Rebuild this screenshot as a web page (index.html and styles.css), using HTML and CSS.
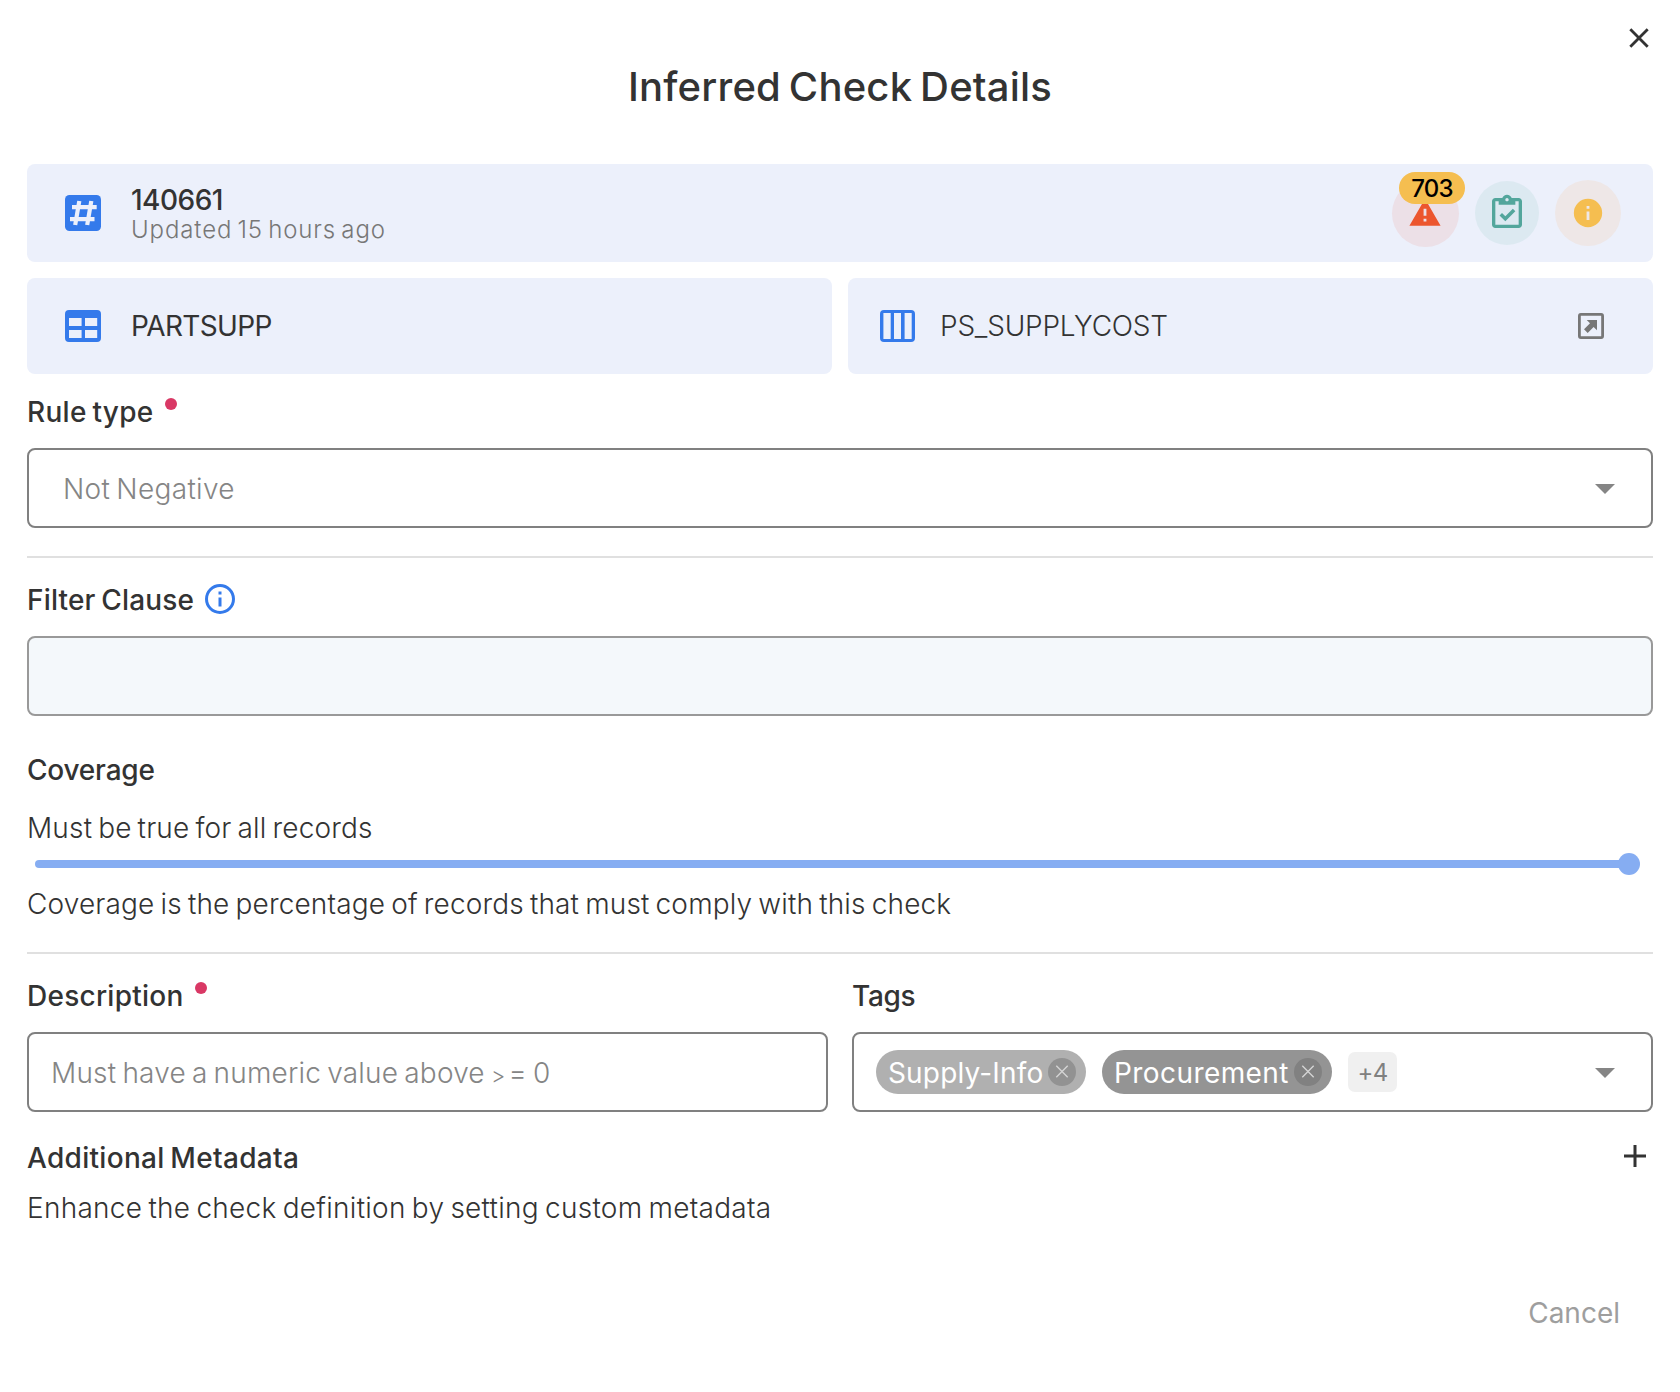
FILE: index.html
```html
<!DOCTYPE html>
<html lang="en">
<head>
<meta charset="utf-8">
<title>Inferred Check Details</title>
<link rel="stylesheet" href="styles.css">
</head>
<body>
<main class="dialog">
  <header class="dialog-header">
    <svg class="close" viewBox="0 0 20 20"><path d="M1.3 1.3 18.7 18.7M18.7 1.3 1.3 18.7"/></svg>
    <h1 class="title">Inferred Check Details</h1>
  </header>

  <section class="card summary">
    <svg class="icon-hash" viewBox="0 0 36 36"><rect width="36" height="36" rx="4.5"/><path d="M7 12.1H31.7M5 24.1H29.5M14.3 6 10.2 30M26.3 6 22.2 30"/></svg>
    <div class="summary-text">
      <div class="check-id">140661</div>
      <div class="updated">Updated 15 hours ago</div>
    </div>
    <div class="statuses">
      <div class="status status-alert">
        <svg viewBox="0 0 24 24"><path d="M13 14H11V9H13M13 18H11V16H13M1 21H23L12 2Z"/></svg>
        <span class="badge">703</span>
      </div>
      <div class="status status-check">
        <svg viewBox="0 0 24 24"><path d="M19 3H14.82C14.4 1.84 13.3 1 12 1S9.6 1.84 9.18 3H5C3.9 3 3 3.9 3 5V19C3 20.1 3.9 21 5 21H19C20.1 21 21 20.1 21 19V5C21 3.9 20.1 3 19 3M12 3C12.55 3 13 3.45 13 4S12.55 5 12 5 11 4.55 11 4 11.45 3 12 3M7 7H17V5H19V19H5V5H7V7M7.5 13.5 9 12 11 14 15.5 9.5 17 11 11 17Z"/></svg>
      </div>
      <div class="status status-info">
        <svg viewBox="0 0 24 24"><path d="M13 9H11V7H13M13 17H11V11H13M12 2A10 10 0 0 0 2 12 10 10 0 0 0 12 22 10 10 0 0 0 22 12 10 10 0 0 0 12 2Z"/></svg>
      </div>
    </div>
  </section>

  <section class="sources">
    <div class="card source">
      <svg class="icon-table" viewBox="0 0 36 32"><path fill-rule="evenodd" d="M4 0H32A4 4 0 0 1 36 4V28A4 4 0 0 1 32 32H4A4 4 0 0 1 0 28V4A4 4 0 0 1 4 0ZM4 8V16H16.6V8ZM20 8V16H32.2V8ZM4 20V28H16.6V20ZM20 20V28H32.2V20Z"/></svg>
      <span class="table-name">PARTSUPP</span>
    </div>
    <div class="card source source-field">
      <svg class="icon-columns" viewBox="0 0 35 32"><path fill-rule="evenodd" d="M4 0H31A4 4 0 0 1 35 4V28A4 4 0 0 1 31 32H4A4 4 0 0 1 0 28V4A4 4 0 0 1 4 0ZM3.4 3V29H10.7V3ZM14 3V29H21V3ZM24.6 3V29H31.7V3Z"/></svg>
      <span class="field-name">PS_SUPPLYCOST</span>
      <svg class="icon-open" viewBox="0 0 26 26"><rect x="1.4" y="1.4" width="23.2" height="23.2" rx="1.5"/><path d="M8.7 7H19V17.3L15.6 14 9.7 20 6 16.2 12 10.3Z"/></svg>
    </div>
  </section>

  <section class="field rule-type">
    <div class="label label-rule">Rule type<i class="required"></i></div>
    <div class="control select"><span class="value value-rule">Not Negative</span><i class="caret"></i></div>
  </section>

  <hr class="divider">

  <section class="field filter">
    <div class="label label-filter">Filter Clause
      <svg class="icon-info" viewBox="0 0 24 24"><path d="M11 9H13V7H11M12 20C7.59 20 4 16.41 4 12S7.59 4 12 4 20 7.59 20 12 16.41 20 12 20M12 2A10 10 0 0 0 2 12 10 10 0 0 0 12 22 10 10 0 0 0 22 12 10 10 0 0 0 12 2M11 17H13V11H11V17Z"/></svg>
    </div>
    <div class="control empty"></div>
  </section>

  <section class="coverage">
    <div class="label label-coverage">Coverage</div>
    <p class="text must">Must be true for all records</p>
    <div class="slider"><i class="track"></i><i class="thumb"></i></div>
    <p class="text hint">Coverage is the percentage of records that must comply with this check</p>
  </section>

  <hr class="divider divider-low">

  <section class="columns">
    <div class="field">
      <div class="label label-description">Description<i class="required"></i></div>
      <div class="control description"><span class="value value-description">Must have a numeric value above <span class="sign">&gt;</span>= 0</span></div>
    </div>
    <div class="field">
      <div class="label label-tags">Tags</div>
      <div class="control tags">
        <span class="chip chip-supply"><span class="chip-text">Supply-Info</span><svg viewBox="0 0 28 28"><circle cx="14" cy="14" r="14"/><path d="M8.3 7.8 19.7 19.2M19.7 7.8 8.3 19.2"/></svg></span>
        <span class="chip chip-procurement"><span class="chip-text">Procurement</span><svg viewBox="0 0 28 28"><circle cx="14" cy="14" r="14"/><path d="M8.3 7.8 19.7 19.2M19.7 7.8 8.3 19.2"/></svg></span>
        <span class="more">+4</span>
        <i class="caret"></i>
      </div>
    </div>
  </section>

  <section class="metadata">
    <div class="metadata-head">
      <div class="label label-metadata">Additional Metadata</div>
      <svg class="plus" viewBox="0 0 22 22"><path d="M0 11H22M11 0V22"/></svg>
    </div>
    <p class="text">Enhance the check definition by setting custom metadata</p>
  </section>

  <footer class="actions"><button class="cancel" type="button">Cancel</button></footer>
</main>
</body>
</html>
```
FILE: styles.css
```css
* { box-sizing: border-box; }

body {
  margin: 0;
  background: #fff;
  color: #333;
  font-family: Inter, "Noto Sans", sans-serif;
  font-size: 28px;
  line-height: 36px;
}

svg { display: block; flex: none; }
h1, p { margin: 0; }
i { display: block; flex: none; }

.dialog { height: 1392px; padding: 28px 27px 0; }

/* header */
.dialog-header { display: flex; flex-direction: column; }
.close {
  align-self: flex-end;
  width: 20px;
  height: 20px;
  margin-right: 4px;
  stroke: #333;
  stroke-width: 2.8;
}
.title {
  margin-top: 15px;
  font-size: 40px;
  font-weight: 500;
  line-height: 48px;
  letter-spacing: 0.2px;
  word-spacing: -3px;
  text-align: center;
}

/* cards */
.card {
  display: flex;
  align-items: center;
  border-radius: 8px;
  background: #ecf0fb;
}
.summary { height: 98px; margin-top: 53px; padding: 0 32px 0 38px; }
.icon-hash { width: 36px; height: 36px; fill: #347aeb; }
.icon-hash path { fill: none; stroke: #ecf0fb; stroke-width: 4.2; }
.summary-text { flex: 1; margin-left: 30px; padding-top: 1px; white-space: nowrap; }
.check-id { font-weight: 450; line-height: 32px; letter-spacing: -0.5px; }
.updated { color: #777; font-size: 24px; font-weight: 350; line-height: 28px; letter-spacing: 0.9px; word-spacing: -2.5px; }

.statuses { display: flex; align-items: center; gap: 16px; }
.status {
  position: relative;
  display: flex;
  align-items: center;
  justify-content: center;
  border-radius: 50%;
}
.status-alert { width: 67px; height: 67px; background: #ece0e7; }
.status-alert svg { width: 34px; height: 34px; margin-right: 1px; fill: #ec562e; }
.status-check { width: 64px; height: 64px; background: #dce9f1; }
.status-check svg { width: 40px; height: 40px; margin-right: 1px; fill: #53a69c; }
.status-info { width: 66px; height: 66px; background: #eee7e7; }
.status-info svg { width: 34px; height: 34px; fill: #f5be50; }
.badge {
  position: absolute;
  top: -7.5px;
  left: 7px;
  width: 66px;
  height: 32px;
  border-radius: 16px;
  background: #f5be50;
  color: #000;
  font-size: 24px;
  font-weight: 500;
  line-height: 34px;
  letter-spacing: -0.8px;
  text-align: center;
}

.sources { display: grid; grid-template-columns: 1fr 1fr; gap: 16px; margin-top: 16px; }
.source { height: 96px; padding-left: 38px; }
.source-field { padding: 0 49px 0 32px; }
.icon-table { width: 36px; height: 32px; fill: #347aeb; }
.icon-columns { width: 35px; height: 32px; fill: #347aeb; }
.table-name { margin-left: 30px; letter-spacing: -0.63px; }
.field-name { flex: 1; margin-left: 25px; font-weight: 350; letter-spacing: -0.2px; }
.icon-open { width: 26px; height: 26px; fill: #777; }
.icon-open rect { fill: none; stroke: #777; stroke-width: 2.8; }

/* form fields */
.label { display: flex; align-items: center; height: 36px; font-weight: 500; }
.label-rule { letter-spacing: 0.3px; word-spacing: -2px; }
.label-filter { letter-spacing: 0.17px; word-spacing: -2px; }
.label-coverage { letter-spacing: -0.2px; }
.label-description { letter-spacing: 0.25px; }
.label-tags { letter-spacing: -0.3px; }
.label-metadata { letter-spacing: 0.3px; word-spacing: -2px; }
.required {
  width: 12px;
  height: 12px;
  margin: -16px 0 0 11px;
  border-radius: 50%;
  background: #d93865;
}
.control {
  display: flex;
  align-items: center;
  height: 80px;
  margin-top: 18px;
  padding-top: 2px;
  border: 2px solid #808080;
  border-radius: 8px;
}
.value { flex: 1; color: #858585; font-weight: 300; word-spacing: -2px; }
.value-rule { letter-spacing: 0.32px; }
.value-description { padding-top: 1px; letter-spacing: 0.2px; }
.sign { margin-right: 3px; font-size: 22px; }
.caret {
  width: 20px;
  height: 10px;
  margin-right: 36px;
  background: #858585;
  clip-path: polygon(0 0, 100% 0, 50% 100%);
}
.rule-type { margin-top: 20px; }
.select { padding-left: 34px; }
.divider { height: 2px; margin: 28px 0 24px; border: 0; background: #e0e0e0; }
.icon-info { width: 36px; height: 36px; margin: -2px 0 0 8px; fill: #347aeb; }
.empty { border-color: #999; background: #f4f8fb; }

.coverage { margin-top: 36px; }
.text { font-weight: 300; white-space: nowrap; letter-spacing: 0.16px; word-spacing: -2px; }
.must { margin-top: 22px; }
.slider { display: flex; align-items: center; height: 22px; margin: 7px 13px 11px 8px; }
.track { flex: 1; height: 8px; border-radius: 4px 0 0 4px; background: #86adf2; }
.thumb { width: 22px; height: 22px; margin-left: -4px; border-radius: 50%; background: #86adf2; }
.divider-low { margin-top: 30px; }

.columns { display: grid; grid-template-columns: 1fr 1fr; gap: 24px; }
.description { padding-left: 22px; }
.tags { padding-top: 0; padding-left: 22px; }
.chip {
  display: flex;
  align-items: center;
  height: 44px;
  margin-right: 16px;
  border-radius: 22px;
  color: #fff;
}
.chip-supply { width: 210px; padding-left: 12px; background: #b0b0b0; }
.chip-procurement { width: 230px; padding-left: 12px; background: #949494; }
.chip-text { flex: 1; padding-top: 2px; }
.chip-supply .chip-text { letter-spacing: 0.16px; }
.chip-procurement .chip-text { letter-spacing: 0.42px; }
.chip svg { width: 28px; height: 28px; margin-right: 10px; }
.chip path { stroke: #d4d4d4; stroke-width: 1.4; }
.chip-supply circle { fill: #929292; }
.chip-procurement circle { fill: #818181; }
.more {
  width: 49px;
  height: 40px;
  border-radius: 7px;
  background: #f0f0f0;
  color: #808080;
  font-size: 24px;
  line-height: 42px;
  letter-spacing: -0.8px;
  text-align: center;
}
.tags .caret { margin-top: 2px; margin-left: auto; }

.metadata { margin-top: 28px; }
.metadata-head { display: flex; justify-content: space-between; }
.plus { width: 22px; height: 22px; margin: 5px 7px 0 0; stroke: #333; stroke-width: 3; }
.metadata .text { margin-top: 14px; letter-spacing: 0.27px; }

/* actions */
.actions { display: flex; justify-content: flex-end; margin-top: 69px; }
.cancel {
  padding: 0 33px 0 0;
  border: 0;
  background: none;
  color: #9e9e9e;
  font: inherit;
}
```
